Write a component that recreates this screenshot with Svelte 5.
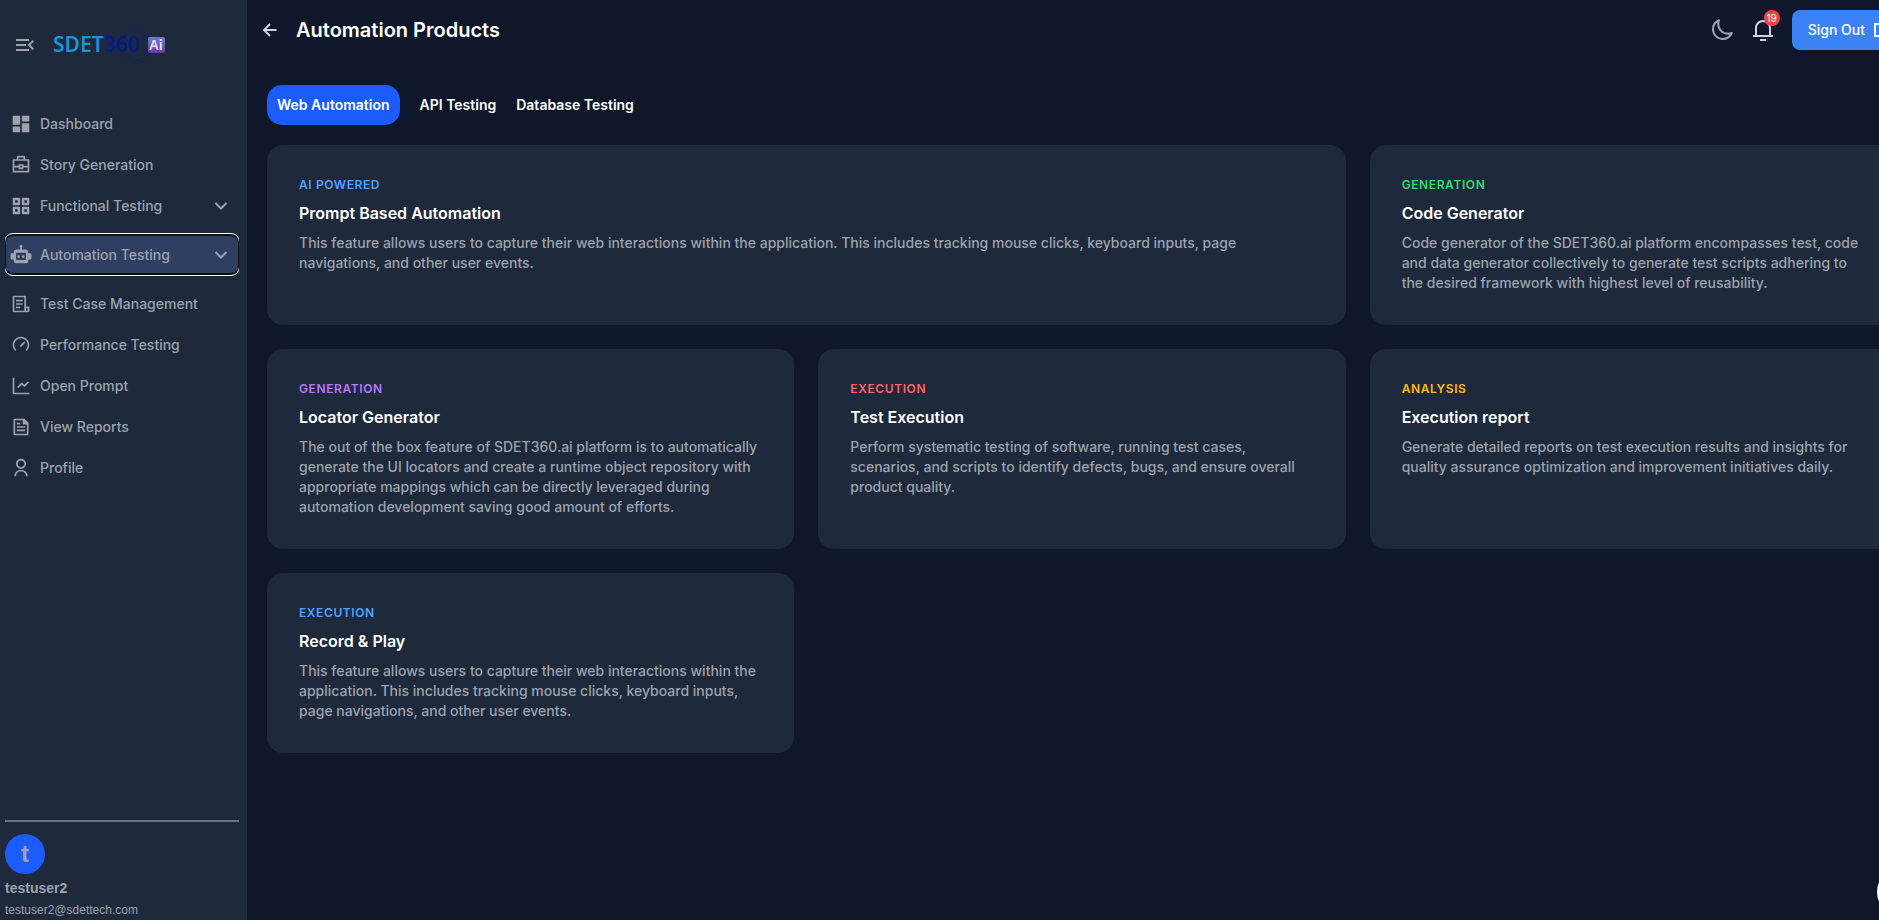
<script lang="ts">
  type Card = {
    tag: string;
    tone: string;
    title: string;
    text: string;
    wide?: boolean;
  };

  const menu = [
    { label: 'Dashboard', icon: 'dashboard' },
    { label: 'Story Generation', icon: 'briefcase' },
    { label: 'Functional Testing', icon: 'grid', expandable: true },
    { label: 'Automation Testing', icon: 'robot', expandable: true },
    { label: 'Test Case Management', icon: 'receipt' },
    { label: 'Performance Testing', icon: 'gauge' },
    { label: 'Open Prompt', icon: 'chart' },
    { label: 'View Reports', icon: 'report' },
    { label: 'Profile', icon: 'person' }
  ];

  const tabs = ['Web Automation', 'API Testing', 'Database Testing'];

  const cards: Card[] = [
    {
      tag: 'AI POWERED',
      tone: 'blue',
      title: 'Prompt Based Automation',
      text: 'This feature allows users to capture their web interactions within the application. This includes tracking mouse clicks, keyboard inputs, page navigations, and other user events.',
      wide: true
    },
    {
      tag: 'GENERATION',
      tone: 'green',
      title: 'Code Generator',
      text: 'Code generator of the SDET360.ai platform encompasses test, code and data generator collectively to generate test scripts adhering to the desired framework with highest level of reusability.'
    },
    {
      tag: 'GENERATION',
      tone: 'purple',
      title: 'Locator Generator',
      text: 'The out of the box feature of SDET360.ai platform is to automatically generate the UI locators and create a runtime object repository with appropriate mappings which can be directly leveraged during automation development saving good amount of efforts.'
    },
    {
      tag: 'EXECUTION',
      tone: 'red',
      title: 'Test Execution',
      text: 'Perform systematic testing of software, running test cases, scenarios, and scripts to identify defects, bugs, and ensure overall product quality.'
    },
    {
      tag: 'ANALYSIS',
      tone: 'amber',
      title: 'Execution report',
      text: 'Generate detailed reports on test execution results and insights for quality assurance optimization and improvement initiatives daily.'
    },
    {
      tag: 'EXECUTION',
      tone: 'blue',
      title: 'Record & Play',
      text: 'This feature allows users to capture their web interactions within the application. This includes tracking mouse clicks, keyboard inputs, page navigations, and other user events.'
    }
  ];

  // rings of dots behind the "360" part of the logo
  const rings = [
    { r: 15, count: 40, size: 0.6 },
    { r: 18, count: 46, size: 0.45 },
    { r: 21, count: 50, size: 0.3 }
  ];
  const dots = rings.flatMap((ring) =>
    Array.from({ length: ring.count }, (_, i) => {
      const angle = (i / ring.count) * Math.PI * 2;
      return {
        x: 92 + ring.r * Math.cos(angle),
        y: 22 + ring.r * Math.sin(angle),
        size: ring.size
      };
    })
  );

  let activeItem = $state('Automation Testing');
  let activeTab = $state('Web Automation');
</script>

<div class="layout">
  <aside class="sidebar">
    <div class="brand">
      <button class="icon-button" aria-label="Collapse menu">
        <svg width="24" height="24" viewBox="0 0 24 24" fill="currentColor">
          <path d="M3 18h13v-2H3v2zM3 13h10v-2H3v2zm0-7v2h13V6H3zm18 9.59L17.42 12 21 8.41 19.59 7l-5 5 5 5L21 15.59z" />
        </svg>
      </button>
      <svg class="logo" width="120" height="44" viewBox="0 0 120 44" role="img" aria-label="SDET360 Ai">
        <defs>
          <linearGradient id="ai-badge" x1="0" y1="0" x2="0" y2="1">
            <stop offset="0" stop-color="#6b7cd0" />
            <stop offset="1" stop-color="#6a3a9c" />
          </linearGradient>
        </defs>
        {#each dots as dot}
          <circle cx={dot.x} cy={dot.y} r={dot.size} fill="#081c88" />
        {/each}
        <text class="logo-name" x="8" y="29" fill="#1b93d6">SDET<tspan fill="#071a86">360</tspan></text>
        <circle cx="99" cy="15" r="2" fill="none" stroke="#071a86" />
        <rect x="103" y="14" width="17" height="16" rx="2" fill="url(#ai-badge)" />
        <text class="logo-ai" x="111" y="27" text-anchor="middle" fill="#e8e4f2">Ai</text>
      </svg>
    </div>

    <nav class="menu">
      {#each menu as item}
        <button
          class="menu-item"
          class:active={activeItem === item.label}
          onclick={() => (activeItem = item.label)}
        >
          <svg
            class="menu-icon"
            width="20"
            height="20"
            viewBox={item.icon === 'robot' ? '1 1 22 22' : '0 0 24 24'}
            fill="currentColor"
          >
            {#if item.icon === 'dashboard'}
              <path d="M2 13h9V2H2v11zm0 9h9v-7H2v7zm11 0h9V11h-9v11zm0-20v7h9V2h-9z" />
            {:else if item.icon === 'briefcase'}
              <path d="M7 5V2a1 1 0 0 1 1-1h8a1 1 0 0 1 1 1v3h4a1 1 0 0 1 1 1v14a1 1 0 0 1-1 1H3a1 1 0 0 1-1-1V6a1 1 0 0 1 1-1h4zM4 15v4h16v-4h-5v2H9v-2H4zm16-2V7H4v6h5v-2h6v2h5zm-9 0v2h2v-2h-2zM9 3v2h6V3H9z" />
            {:else if item.icon === 'grid'}
              <path fill-rule="evenodd" d="M3 2h7a1 1 0 0 1 1 1v7a1 1 0 0 1-1 1H3a1 1 0 0 1-1-1V3a1 1 0 0 1 1-1zm2 3v3h3V5H5zM14 2h7a1 1 0 0 1 1 1v7a1 1 0 0 1-1 1h-7a1 1 0 0 1-1-1V3a1 1 0 0 1 1-1zm2 3v3h3V5h-3zM3 13h7a1 1 0 0 1 1 1v7a1 1 0 0 1-1 1H3a1 1 0 0 1-1-1v-7a1 1 0 0 1 1-1zm2 3v3h3v-3H5zM14 13h7a1 1 0 0 1 1 1v7a1 1 0 0 1-1 1h-7a1 1 0 0 1-1-1v-7a1 1 0 0 1 1-1zm2 3v3h3v-3h-3z" />
            {:else if item.icon === 'robot'}
              <path fill-rule="evenodd" d="M12 1a1.6 1.6 0 0 1 1 2.9V6h3.5a3.5 3.5 0 0 1 3.5 3.5V10h2a1.5 1.5 0 0 1 1.5 1.5v4A1.5 1.5 0 0 1 22 17h-2v1.5a2.5 2.5 0 0 1-2.5 2.5h-11A2.5 2.5 0 0 1 4 18.5V17H2a1.5 1.5 0 0 1-1.5-1.5v-4A1.5 1.5 0 0 1 2 10h2v-.5A3.5 3.5 0 0 1 7.500 6H11V3.9A1.6 1.6 0 0 1 12 1zM7.500 9.500a1 1 0 0 0-1 1v6a1 1 0 0 0 1 1h9a1 1 0 0 0 1-1v-6a1 1 0 0 0-1-1h-9zm1.900 2.700a1.500 1.500 0 1 1 0 3 1.500 1.500 0 0 1 0-3zm5.200 0a1.500 1.500 0 1 1 0 3 1.500 1.500 0 0 1 0-3z" />
            {:else if item.icon === 'receipt'}
              <path d="M20 22H4a2 2 0 0 1-2-2V3a1 1 0 0 1 1-1h14a1 1 0 0 1 1 1v12h4v5a2 2 0 0 1-2 2zm-2-5v2.500a.5.5 0 0 0 2 0V17h-2zm-2 3V4H4v16h12zM6 7h8v2H6V7zm0 4h8v2H6v-2zm0 4h5v2H6v-2z" />
            {:else if item.icon === 'gauge'}
              <path d="M12 2c5.520 0 10 4.480 10 10a9.970 9.970 0 0 1-3 7.140l-1.400-1.400A8 8 0 1 0 4 12c0 2.240.92 4.260 2.400 5.720L5 19.140A9.970 9.970 0 0 1 2 12C2 6.480 6.480 2 12 2zm3.800 5.700 1.400 1.400-4.300 4.600a1.200 1.200 0 0 1-1.700-1.700l4.600-4.300z" />
            {:else if item.icon === 'chart'}
              <path d="M4 2v18h18v2H2V2h2zm16.300 4.300 1.400 1.400L16 13.400l-3-3-4.300 4.300-1.400-1.400L13 7.600l3 3 4.300-4.300z" />
            {:else if item.icon === 'report'}
              <path d="M20 22H4a1 1 0 0 1-1-1V3a1 1 0 0 1 1-1h12l5 5v14a1 1 0 0 1-1 1zm-1-2V9h-5V4H5v16h14zM7 7h4v2H7V7zm0 4h10v2H7v-2zm0 4h10v2H7v-2z" />
            {:else}
              <path d="M4 22a8 8 0 1 1 16 0h-2a6 6 0 1 0-12 0H4zm8-9c-3.315 0-6-2.685-6-6s2.685-6 6-6 6 2.685 6 6-2.685 6-6 6zm0-2c2.210 0 4-1.790 4-4s-1.790-4-4-4-4 1.790-4 4 1.790 4 4 4z" />
            {/if}
          </svg>
          <span>{item.label}</span>
          {#if item.expandable}
            <svg class="chevron" width="20" height="20" viewBox="0 0 20 20" fill="none" stroke="currentColor" stroke-width="2">
              <path d="M4.500 7 10 12.500 15.500 7" />
            </svg>
          {/if}
        </button>
      {/each}
    </nav>

    <div class="account">
      <div class="avatar">t</div>
      <strong>testuser2</strong>
      <small>testuser2@sdettech.com</small>
    </div>
  </aside>

  <main class="page">
    <header class="topbar">
      <button class="icon-button back" aria-label="Back">
        <svg width="20" height="20" viewBox="0 0 20 20" fill="none" stroke="currentColor" stroke-width="2">
          <path d="M16.500 10H4.500M10 4l-6 6 6 6" />
        </svg>
      </button>
      <h1>Automation Products</h1>
      <div class="actions">
        <button class="icon-button moon" aria-label="Toggle theme">
          <svg width="24" height="24" viewBox="0 0 24 24" fill="none" stroke="currentColor" stroke-width="2" stroke-linejoin="round">
            <path d="M21.752 15.002A9.720 9.720 0 0 1 18 15.750c-5.385 0-9.750-4.365-9.750-9.750 0-1.330.266-2.597.748-3.752A9.753 9.753 0 0 0 3 11.250C3 16.635 7.365 21 12.750 21a9.753 9.753 0 0 0 9.002-5.998z" />
          </svg>
        </button>
        <button class="icon-button bell" aria-label="Notifications">
          <svg width="24" height="24" viewBox="0 0 24 24" fill="currentColor">
            <path d="M20 17h2v2H2v-2h2v-7a8 8 0 1 1 16 0v7zm-2 0v-7a6 6 0 1 0-12 0v7h12zm-9 4h6v2H9v-2z" />
          </svg>
          <span class="badge">19</span>
        </button>
        <button class="sign-out">
          Sign Out
          <svg width="20" height="20" viewBox="0 0 20 20" fill="none" stroke="currentColor" stroke-width="2">
            <path d="M12 6V4H2v12h10v-2M7 10h11M15 7l3 3-3 3" />
          </svg>
        </button>
      </div>
    </header>

    <div class="tabs" role="tablist">
      {#each tabs as tab}
        <button
          class="tab"
          class:selected={activeTab === tab}
          role="tab"
          aria-selected={activeTab === tab}
          onclick={() => (activeTab = tab)}
        >
          {tab}
        </button>
      {/each}
    </div>

    <section class="cards">
      {#each cards as card}
        <article class="card" class:wide={card.wide}>
          <p class="tag {card.tone}">{card.tag}</p>
          <h2>{card.title}</h2>
          <p class="text">{card.text}</p>
        </article>
      {/each}
    </section>
  </main>

  <button class="chat" aria-label="Open chat"></button>
</div>

<style>
  :global(body) {
    background: #0f172a;
  }

  .layout {
    display: flex;
    min-height: 100vh;
    overflow: hidden;
    position: relative;
    font-family: Inter, sans-serif;
    font-size: 14px;
    line-height: 20px;
    color: #9ca3af;
  }

  button {
    border: 0;
    padding: 0;
    background: none;
    color: inherit;
    font: inherit;
    cursor: pointer;
  }

  svg {
    display: block;
    flex: none;
  }

  h1,
  h2,
  p {
    margin: 0;
  }

  .icon-button {
    position: relative;
    display: flex;
  }

  /* Sidebar */
  .sidebar {
    box-sizing: border-box;
    display: flex;
    flex-direction: column;
    flex: none;
    width: 247px;
    height: 100vh;
    padding: 0 8px 0 5px;
    background: #1e293b;
  }

  .brand {
    display: flex;
    align-items: center;
    gap: 8px;
    height: 90px;
    padding-left: 8px;
  }

  .logo-name {
    font-family: 'Noto Sans', sans-serif;
    font-size: 21px;
    font-weight: 600;
  }

  .logo-ai {
    font-family: 'Noto Sans', sans-serif;
    font-size: 14px;
    font-weight: 600;
  }

  .menu {
    display: flex;
    flex-direction: column;
    flex: none;
    padding-top: 13px;
    overflow: hidden;
  }

  .menu-item {
    box-sizing: border-box;
    display: flex;
    align-items: center;
    gap: 9px;
    height: 41px;
    padding: 0 8px 0 6px;
    font-weight: 500;
    text-align: left;
  }

  .menu-icon {
    overflow: visible;
  }

  /* side edges of the outline are cut off by the menu */
  .menu-item.active {
    margin: 8px 0;
    padding: 0 7px 0 5px;
    border: 1px solid #101010;
    border-width: 2px 1px;
    border-radius: 8px;
    outline: 1px solid #fff;
    background: #2f3f61;
  }

  .chevron {
    margin-left: auto;
  }

  .account {
    display: flex;
    flex-direction: column;
    align-items: flex-start;
    margin-top: auto;
    padding-top: 12px;
    border-top: 2px solid #6b7280;
    font-family: 'Liberation Sans', sans-serif;
  }

  .avatar {
    display: flex;
    align-items: center;
    justify-content: center;
    width: 40px;
    height: 40px;
    margin-bottom: 4px;
    border-radius: 50%;
    background: #1c5bfc;
    font-size: 24px;
    font-weight: 700;
  }

  .account small {
    margin-top: 2px;
    font-size: 12px;
  }

  /* Page runs past the right edge of the window */
  .page {
    flex: none;
    box-sizing: border-box;
    width: calc(100vw + 38px - 247px);
    padding: 0 20px;
  }

  .topbar {
    display: flex;
    align-items: center;
    height: 60px;
    margin: 0 -12px 0 -7px;
  }

  .back {
    color: #d1d5db;
  }

  h1 {
    margin-left: 16px;
    font-size: 20px;
    font-weight: 600;
    line-height: 28px;
    color: #fff;
  }

  .actions {
    display: flex;
    align-items: center;
    gap: 17px;
    margin-left: auto;
  }

  .bell {
    color: #d1d5db;
  }

  .badge {
    position: absolute;
    top: -8px;
    right: -5px;
    width: 16px;
    height: 16px;
    border-radius: 50%;
    background: #ef4444;
    color: #fff;
    font-size: 10px;
    line-height: 16px;
    text-align: center;
  }

  .sign-out {
    display: flex;
    align-items: center;
    gap: 8px;
    height: 40px;
    padding: 0 16px;
    border-radius: 8px;
    background: #3b82f6;
    color: #fff;
    font-weight: 500;
  }

  .tabs {
    display: flex;
    gap: 20px;
    margin-top: 25px;
  }

  .tab {
    height: 40px;
    color: #fff;
    font-weight: 600;
  }

  .tab.selected {
    padding: 0 10px;
    border-radius: 15px;
    background: #1c5bfc;
  }

  .cards {
    display: grid;
    grid-template-columns: repeat(3, 1fr);
    gap: 24px;
    margin-top: 20px;
  }

  .card {
    padding: 32px;
    border-radius: 16px;
    background: #1e293b;
  }

  .card.wide {
    grid-column: span 2;
  }

  .text {
    max-width: 960px;
    font-weight: 500;
  }

  .tag {
    font-size: 12px;
    font-weight: 600;
    line-height: 16px;
    letter-spacing: 0.05em;
  }

  .blue {
    color: #51a2ff;
  }

  .green {
    color: #3dd675;
  }

  .purple {
    color: #b678fb;
  }

  .red {
    color: #ff6467;
  }

  .amber {
    color: #fcbb1d;
  }

  h2 {
    margin: 8px 0;
    font-size: 16px;
    font-weight: 600;
    line-height: 24px;
    color: #fff;
  }

  .chat {
    position: absolute;
    right: -46px;
    bottom: 4px;
    width: 48px;
    height: 48px;
    border-radius: 50%;
    background: #fff;
  }
</style>
